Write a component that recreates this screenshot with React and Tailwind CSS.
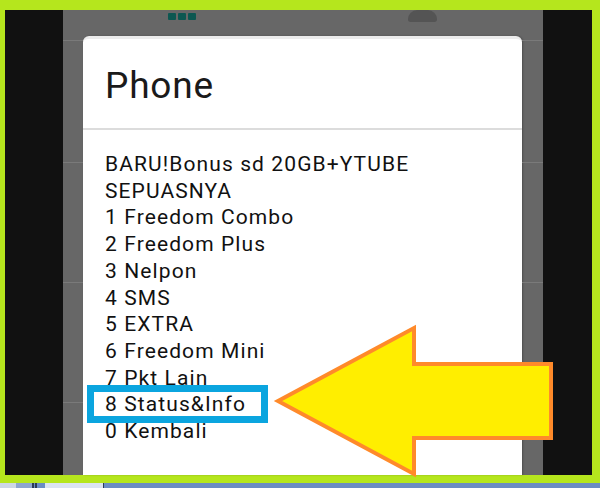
import React from "react";

const items = [
  "BARU!Bonus sd 20GB+YTUBE",
  "SEPUASNYA",
  "1 Freedom Combo",
  "2 Freedom Plus",
  "3 Nelpon",
  "4 SMS",
  "5 EXTRA",
  "6 Freedom Mini",
  "7 Pkt Lain",
  "8 Status&Info",
  "0 Kembali",
];

function SideStrip({ width }) {
  // faint separators of the list behind the dialog
  return (
    <div className={`${width} flex flex-col`}>
      <div className="h-[4px]" />
      <div className="h-[1px] bg-[#7a7a7a]" />
      <div className="h-[121px]" />
      <div className="h-[1px] bg-[#7a7a7a]" />
      <div className="h-[119px]" />
      <div className="h-[1px] bg-[#7a7a7a]" />
      <div className="h-[119px]" />
      <div className="h-[1px] bg-[#7a7a7a]" />
    </div>
  );
}

export default function App() {
  return (
    <div
      className="relative w-[600px] h-[488px] overflow-hidden bg-[#b5e61d] flex flex-col"
      style={{ fontFamily: "Roboto, 'Noto Sans', sans-serif" }}
    >
      <div className="h-[10px] shrink-0" />
      <div className="h-[465px] shrink-0 flex">
        <div className="w-[5px]" />
        <div className="w-[58px] bg-[#111111]" />
        <div className="w-[480px] bg-[#676767] flex flex-col">
          {/* top status bar */}
          <div className="relative h-[26px] shrink-0">
            <div className="absolute left-[105px] top-[3px] flex gap-[2px]">
              <div className="w-[8px] h-[7px] bg-[#0c5751] rounded-[1px]" />
              <div className="w-[8px] h-[7px] bg-[#0c5751] rounded-[1px]" />
              <div className="w-[8px] h-[7px] bg-[#0c5751] rounded-[1px]" />
            </div>
            <div className="absolute left-[345px] top-0 w-[29px] h-[12px] bg-[#545454] rounded-b-[4px] rounded-t-[14px]" />
          </div>
          <div className="flex flex-1">
            <SideStrip width="w-[20px]" />
            <div className="w-[439px] bg-white rounded-t-[6px] flex flex-col border-t-[3px] border-[#ececec] shadow-[1px_0_2px_rgba(0,0,0,0.25)]">
              <div className="h-[89px] pt-[28px] pl-[22px] text-[37px] leading-[37px] tracking-[0.8px] text-[#1a1a1a]">
                Phone
              </div>
              <div className="h-[2px] bg-[#dcdcdc]" />
              <div className="pt-[21px] pl-[22px] text-[21px] leading-[26.7px] tracking-[1.1px] text-[#111111]">
                {items.map((t) => (
                  <div key={t}>{t}</div>
                ))}
              </div>
            </div>
            <SideStrip width="w-[21px]" />
          </div>
        </div>
        <div className="w-[49px] bg-[#111111]" />
        <div className="w-[8px]" />
      </div>
      <div className="h-[8px] shrink-0" />
      {/* taskbar strip */}
      <div className="h-[5px] shrink-0 bg-[#6b8cc3] flex">
        <div className="w-[16px] bg-[#cdd7e6]" />
        <div className="w-[16px] bg-[#8ea6cf]" />
        <div className="w-[2px] bg-[#2c3b55]" />
        <div className="w-[1px]" />
        <div className="w-[2px] bg-[#2c3b55]" />
        <div className="w-[8px]" />
        <div className="w-[58px] bg-[#dbe4f1]" />
        <div className="w-[1px] bg-[#2c3b55]" />
      </div>

      {/* highlight box */}
      <div className="absolute left-[87px] top-[385px] w-[181px] h-[38px] border-[7px] border-[#0ba5df]" />

      {/* arrow */}
      <svg className="absolute left-0 top-0" width="600" height="488" viewBox="0 0 600 488">
        <polygon
          points="278,401 414,328 414,364 551,364 551,438 414,438 414,474"
          fill="#ffee00"
          stroke="#ff8a2a"
          strokeWidth="4"
          strokeLinejoin="miter"
        />
      </svg>
    </div>
  );
}
